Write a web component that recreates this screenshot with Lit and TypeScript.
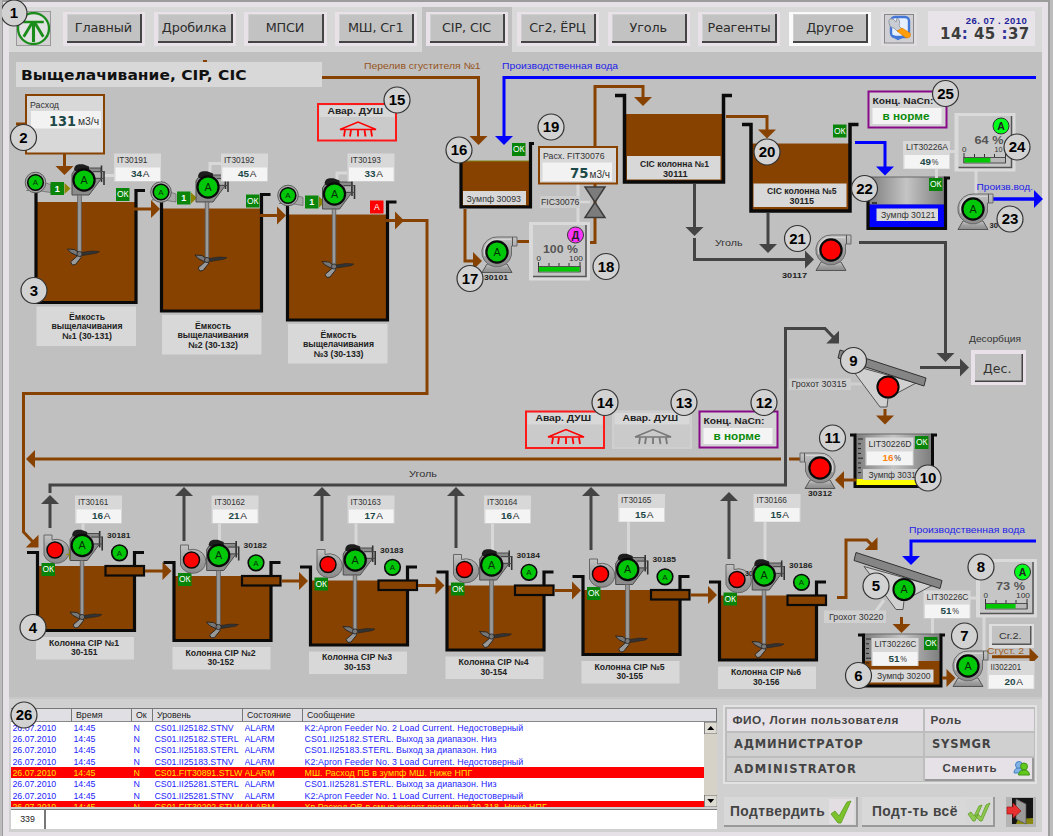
import { LitElement, html, svg, css } from "lit";
import { customElement } from "lit/decorators.js";
import { classMap } from "lit/directives/class-map.js";

const BROWN = "#874200";
const DARK = "#444444";
const BLUE = "#0000ff";
const PLATE = "#d8d8d8";
const SANS = "Liberation Sans, Arial, sans-serif";
const WIDE = "DejaVu Sans, Verdana, sans-serif";

type Pt = [number, number];

/* Text fitted between two x positions. */
const text = (x1: number, x2: number, y: number, s: string, size = 8.5, fill = "#333", weight = 400, family = SANS) => svg`
  <text x=${x1} y=${y} textLength=${x2 - x1} lengthAdjust="spacingAndGlyphs" font-family=${family}
    font-size=${size} font-weight=${weight} fill=${fill}>${s}</text>`;

const rect = (x1: number, y1: number, x2: number, y2: number, fill: string, stroke = "none", sw = 0) => svg`
  <rect x=${x1} y=${y1} width=${x2 - x1} height=${y2 - y1} fill=${fill} stroke=${stroke} stroke-width=${sw}></rect>`;

const line = (pts: Pt[], color: string, w = 3) => svg`
  <polyline points=${pts.map((p) => p.join(",")).join(" ")} fill="none" stroke=${color} stroke-width=${w}></polyline>`;

/* Arrow head with its tip at (x, y), rotated by the given angle from pointing right. */
const head = (x: number, y: number, angle: number, color: string) => svg`
  <path d="M0 0L-9 -9V9Z" fill=${color} transform="translate(${x} ${y}) rotate(${angle})"></path>`;

const marker = (n: number, x: number, y: number) => svg`
  <circle cx=${x} cy=${y} r="13" fill="#d2d2d2" stroke="#333" stroke-width="1.2"></circle>
  <text x=${x} y=${y + 5.2} text-anchor="middle" font-family=${SANS} font-size="15" font-weight="700" fill="#000">${n}</text>`;

const lamp = (x: number, y: number, r: number, color: string, letter = "", ring = 1.8) => svg`
  <circle cx=${x} cy=${y} r=${r} fill=${color} stroke="#0a0a0a" stroke-width=${ring}></circle>
  <text x=${x} y=${y + r * 0.36} text-anchor="middle" font-family=${SANS} font-size=${r * 1.02} fill="#053005">${letter}</text>`;

const status = (x: number, y: number, s = "ОК", color = "#088508") => svg`
  ${rect(x, y, x + 13.5, y + 13, color)}
  <text x=${x + 6.8} y=${y + 9.2} text-anchor="middle" font-family=${SANS} font-size="8.5" fill="#fff">${s}</text>`;

/* Tag name over a white field with a value and its unit. */
const tag = (x: number, y: number, name: string, value: string, unit: string, w = 47, color = "#1d4848") => svg`
  ${rect(x, y, x + w, y + 28, PLATE)}
  ${rect(x + 1.5, y + 14, x + w - 1, y + 27.5, "#f4f4f4")}
  ${text(x + 3, x + (name.length > 8 ? w - 2 : 33.5), y + 9.3, name, 8.5)}
  ${text(x + 17, x + 28, y + 23.5, value, 9.5, color, 700)}
  ${text(x + 28.8, x + 35.5, y + 23.5, unit, 9, "#333")}`;

const pump = (x: number, y: number, color: string, letter = "", flip = false) => svg`
  <g transform="translate(${x} ${y}) scale(${flip ? -1 : 1} 1)">
    <path d="M-10 12L-15 20.500H15L10 12Z" fill="url(#metal)" stroke="#555" stroke-width="1"></path>
    <path d="M20 -15H1A15 15 0 1 0 14.500 3V-6H20Z" fill="url(#metal)" stroke="#6a6a6a" stroke-width="1"></path>
    <path d="M-12 4A12.500 12.500 0 0 1 0 -12.500H14" fill="none" stroke="#d6d6d6" stroke-width="1.200"></path>
    <path d="M15.500 -15V-6" stroke="#555" stroke-width="1"></path>
  </g>
  ${lamp(x, y, 10.6, color, letter, 2.2)}`;

/* Round blower next to an agitator, with its duct and stage number. */
const blower = (x: number, y: number, bx: number, by: number) => svg`
  <path d="M${x - 9} ${y + 8}H${x + 2}L${x + 15} ${y + 10}V${y + 2}L${x + 9} ${y}Z" fill="#a8a8a8" stroke="#666" stroke-width=".7"></path>
  <circle cx=${x} cy=${y} r="10.300" fill="#a8a8a8" stroke="#5c5c5c" stroke-width="1"></circle>
  ${lamp(x, y, 7.8, "#00c808", "А", 1.6)}
  ${rect(bx, by, bx + 13.500, by + 13, "#0b860b")}
  <text x=${bx + 6.8} y=${by + 9.500} text-anchor="middle" font-family=${SANS} font-size="9" font-weight="700" fill="#fff">1</text>
  <path d="M${bx + 14} ${by + 1}L${bx + 20} ${by + 6.500}L${bx + 14} ${by + 12}Z" fill="#8d8500"></path>`;

/* Agitator drive centred on its lamp, with shaft and impeller. */
const agitator = (x: number, y: number, sx: number, sy: number) => svg`
  <path d="M${x - 12} ${y - 6}L${x - 8} ${y - 12}H${x + 17}V${y - 1}L${x + 5} ${y + 15}H${x - 12}Z" fill="#8b8b8b" stroke="#4c4c4c" stroke-width="1"></path>
  <path d="M${x - 10} ${y - 11}Q${x - 9} ${y - 15.500} ${x - 5} ${y - 15.800}H${x - 1}L${x + 5} ${y - 13.500}V${y - 9}H${x - 9}Z" fill="#1d1d1d"></path>
  <path d="M${x + 17.500} ${y - 14.500}V${y + 2}M${x + 20} ${y - 9}V${y + 5}" stroke="#333" stroke-width="1.600"></path>
  <path d="M${x + 9} ${y - 8.500}H${x + 20}M${x + 11} ${y - 1.500}H${x + 20}" stroke="#4a4a4a" stroke-width="1.200"></path>
  <path d="M${x + 10} ${y - 7.500}H${x + 16.500}V${y - 2.500}H${x + 11}Z" fill="#b0b0b0"></path>
  ${rect(sx - 1.8, y + 15, sx + 1.8, sy, "#9a9a9a", "#5c5c5c", 0.8)}
  <g transform="translate(${sx} ${sy + 1})">
    <path d="M-12 -5L-5 -4.500L0 -1L-2 2L-9 -1.500Z" fill="#777" stroke="#222" stroke-width=".9"></path>
    <path d="M2 -1.500L12 -3L20 -2.500L17 -.8L3 1.500Z" fill="#333" stroke="#222" stroke-width=".6"></path>
    <path d="M-1 1L-9 8L-7 11L-4 10.500L2 3Z" fill="#999" stroke="#222" stroke-width=".9"></path>
    <circle r="2.600" fill="#777" stroke="#222" stroke-width=".8"></circle>
  </g>
  ${lamp(x, y, 10.6, "#00c808", "А", 2.2)}`;

const leachTank = (left: number, flangeY: number, fillY: number, bottom: number) => svg`
  ${rect(left, fillY, left + 100, bottom, BROWN)}
  ${line([[left, fillY - 12], [left, bottom], [left + 100, bottom], [left + 100, flangeY], [left + 109, flangeY]], "#0a0a0a", 3.2)}
  ${rect(left + 0.5, bottom + 4, left + 100, bottom + 43.500, PLATE)}`;

const leachName = (cx: number, y: number, n: number) => svg`
  ${text(cx - 18, cx + 18, y, "Ёмкость", 8.3, "#222", 700)}
  ${text(cx - 35.500, cx + 35.500, y + 9.800, "выщелачивания", 8.3, "#222", 700)}
  ${text(cx - 25, cx + 25, y + 19.500, `№${n} (30-13${n})`, 8.5, "#222", 700)}`;

/* One CIP column; dx/dy shift it from the first one in the cascade. */
const column = (n: number, dx: number, dy: number, tagX: number, tagY: number, amps: string) => svg`
  ${line([[83 + dx, tagY + 28], [83 + dx, 535 + dy]], PLATE, 3)}
  <g transform="translate(${dx} ${dy})">
    ${rect(37, 566, 135, 631, BROWN)}
    ${line([[27, 552.500], [37.500, 552.500], [37.500, 630.500], [134.500, 630.500], [134.500, 552.500], [144, 552.500]], "#0a0a0a", 3.2)}
    ${rect(105.5, 566, 144, 575.5, BROWN, "#0a0a0a", 2.2)}
    ${n < 6 ? svg`${line([[145, 571], [164, 571]], BROWN, 3)}${head(171.500, 571, 0, BROWN)}` : ""}
    ${status(41.5, 563)}
    <path d="M44 535H52V540A13 12 0 1 1 44 555Z" fill="url(#metal)" stroke="#666" stroke-width="1"></path>
    ${lamp(55, 550, 8, "#ff0000", "", 1.5)}
    ${n === 1 ? svg`<path d="M66 554H69V549L75 554L69 560V555H66Z" fill="#9c9400"></path>` : ""}
    ${n === 6 ? text(63, 71, 546, "30", 8, "#222", 700) : ""}
    ${agitator(82.200, 545.500, 82, 616)}
    ${lamp(119.500, 552.800, 7.800, "#00c808", "А", 1.600)}
    ${text(107, 130.500, 538, `3018${n}`, 8, "#222", 700)}
    ${rect(36, 637, 134, 659.500, PLATE)}
    ${text(49, 119, 645.500, `Колонна CIP №${n}`, 8.5, "#222", 700)}
    ${text(71, 97.500, 655, `30-15${n}`, 8.5, "#222", 700)}
  </g>
  ${tag(tagX, tagY, `IT3016${n}`, amps, "А")}`;

/* Speed controller: lamp, percentage and a bar scale. */
const controller = (x: number, y: number, pct: number, letter: string, color: string, full: string) => svg`
  ${rect(x, y, x + 61, y + 58.500, "#dadada")}
  ${rect(x + 4, y + 3, x + 56, y + 54, "#c6c6c6")}
  ${line([[x + 4, y + 54.500], [x + 57, y + 54.500], [x + 57, y + 3]], "#555", 1.600)}
  <circle cx=${x + 46.500} cy=${y + 13} r="8" fill=${color} stroke="#333" stroke-width="1"></circle>
  <text x=${x + 46.500} y=${y + 16.800} text-anchor="middle" font-family=${SANS} font-size="10.500" font-weight="700" fill="#222">${letter}</text>
  ${text(x + (pct === 100 ? 14 : 20), x + 49, y + 30.500, `${pct} %`, 11, "#555", 700, SANS)}
  ${text(x + 7.500, x + 12, y + 38.500, "0", 8)}
  ${text(x + 40, x + (full === "100" ? 54 : 48), y + 38.500, full, 8)}
  ${line([[x + 9.500, y + 40], [x + 9.500, y + 50]], "#333", 1)}
  ${line([[x + 51, y + 40], [x + 51, y + 50]], "#333", 1)}
  ${[20, 30, 40].map((d) => line([[x + d, y + 41], [x + d, y + 44]], "#333", 1))}
  ${rect(x + 9.500, y + 44.500, x + 51, y + 50, "#b8b8b8", "#333", 0.800)}
  ${rect(x + 10, y + 45, x + 10 + 40.500 * pct / 100, y + 49.500, "#00c800")}`;

const shower = (x: number, y: number, color: string, border: string) => svg`
  ${rect(x, y, x + 78, y + 36.500, "#cacaca", border, 2)}
  ${rect(x + 1.500, y + 1.500, x + 76.500, y + 13, PLATE)}
  ${text(x + 9.500, x + 65, y + 9.500, "Авар. ДУШ", 9, "#222", 700)}
  <path d="M${x + 22} ${y + 25.500}L${x + 40} ${y + 18}L${x + 58} ${y + 25.500}Z" fill="none" stroke=${color} stroke-width="1.600"></path>
  ${[27, 33, 40, 46.500, 53].map((d) => line([[x + d, y + 26], [x + d - (d < 40 ? 1 : d > 40 ? -1 : 0), y + 32.500]], color, 1.800))}`;

const cyanide = (x: number, y: number) => svg`
  ${rect(x, y, x + 78, y + 36, "#d4d4d4", "#880a88", 2)}
  ${text(x + 4, x + 65, y + 12.500, "Конц. NaCn:", 9, "#222", 700)}
  ${rect(x + 4, y + 16.500, x + 73, y + 32.500, "#f4f4f4")}
  ${text(x + 14, x + 61, y + 28.500, "в норме", 10.500, "#0a8a0a", 700)}`;

const screen = (x: number, y: number, lampColor: string, letter: string) => svg`
  <path d="M${x + 10} ${y + 14}L${x + 42} ${y + 57}H${x + 49}L${x + 50} ${y + 48}L${x + 78} ${y + 33}Z" fill="#d0d0d0" stroke="#555" stroke-width="1"></path>
  <path d="M${x + 2} ${y}L${x + 88} ${y + 28}L${x + 86} ${y + 36}L${x} ${y + 8}Z" fill="#858585" stroke="#333" stroke-width="1"></path>
  ${lamp(x + 50, y + 37, 10.600, lampColor, letter, 2)}`;

const gauge = (x: number, y: number) => [0, 1, 2, 3, 4, 5, 6, 7].map((i) => line([[x, y + i * 4.800], [x + (i % 4 ? 3 : 5), y + i * 4.800]], "#222", 1));

@customElement("process-mimic")
class ProcessMimic extends LitElement {
  static styles = css`
    :host { display: block; }
    svg { display: block; width: 1033px; height: 645px; overflow: visible; }
  `;

  private leaching() {
    return svg`
      ${rect(16, 62, 322, 87, PLATE)}
      ${text(21, 246.500, 80, "Выщелачивание, CIP, CIC", 14, "#111", 700, WIDE)}
      ${rect(203, 60, 207, 62, BROWN)}
      ${line([[16, 124], [26, 124]], BROWN, 3)}
      ${rect(26, 95, 104, 153.500, PLATE, BROWN, 2)}
      ${text(30, 59, 108, "Расход", 9)}
      ${rect(31, 111, 101, 128.500, "#f2f2f2")}
      ${text(49, 76, 125.500, "131", 14, "#1d4848", 700, WIDE)}
      ${text(78, 99, 125, "м3/ч", 10)}
      ${line([[64.500, 154], [64.500, 168]], BROWN, 3)}${head(64.500, 175, 90, BROWN)}
      ${leachTank(36, 190.500, 202, 302.500)}
      ${leachTank(161.500, 194.500, 208.500, 311)}
      ${leachTank(287.500, 202, 214.500, 320)}
      ${leachName(87, 319.500, 1)}${leachName(213, 328.500, 2)}${leachName(338.500, 337.500, 3)}
      ${line([[134, 209], [154, 209]], BROWN)}${head(160, 209, 0, BROWN)}
      ${line([[260, 215.500], [279, 215.500]], BROWN)}${head(286, 215.500, 0, BROWN)}
      ${line([[386, 220.500], [427, 220.500], [427, 393.500], [23.500, 393.500], [23.500, 532], [33, 542]], BROWN)}
      ${head(404, 220.500, 0, BROWN)}${head(38.500, 547.500, 45, BROWN)}
      ${line([[103, 175.500], [114, 175.500]], PLATE, 3)}
      ${line([[210, 172], [210, 163.500], [222, 163.500]], PLATE, 3)}
      ${line([[337, 180], [337, 173], [347, 173]], PLATE, 3)}
      ${blower(35.500, 182.500, 50.500, 182)}
      ${blower(161, 192, 177, 191.500)}
      ${blower(288, 195.500, 305, 195.500)}
      ${agitator(84, 180, 79.500, 253)}
      ${agitator(208, 187, 207, 259)}
      ${agitator(334.500, 194, 334, 265.500)}
      ${tag(114, 153.500, "IT30191", "34", "А")}
      ${tag(221, 153.500, "IT30192", "45", "А")}
      ${tag(347.500, 153.500, "IT30193", "33", "А")}
      ${status(116, 188)}${status(246, 194.500)}${status(370, 200.500, "А", "#ff0000")}
      ${shower(318, 104, "#ff0000", "#ff1a1a")}`;
  }

  private carbon() {
    return svg`
      ${text(364, 480.500, 69, "Перелив сгустителя №1", 9, "#96541c")}
      ${text(502, 618, 69, "Производственная вода", 9, "#2222e8")}
      ${line([[322, 77.500], [478.500, 77.500], [478.500, 138]], BROWN)}${head(478.500, 145, 90, BROWN)}
      ${line([[1036, 77.500], [504, 77.500], [504, 138]], BLUE)}${head(504, 145, 90, BLUE)}
      ${rect(461, 161, 530, 207, BROWN)}
      ${line([[461, 161], [530, 161]], "#83831a", 1)}
      ${line([[461, 156], [461, 207], [530.500, 207], [530.500, 143.500], [534, 143.500]], "#0a0a0a", 3.200)}
      ${rect(463, 191, 526, 205, PLATE)}${text(466.500, 521, 202, "Зумпф 30093", 9)}
      ${status(512, 143)}
      ${line([[465, 209], [465, 261], [476, 261]], BROWN)}${head(482, 261, 0, BROWN)}
      ${line([[517, 241.500], [532, 241.500]], BROWN)}
      ${line([[586, 242.500], [595, 242.500], [595, 86.500], [643, 86.500], [643, 98]], BROWN)}${head(643, 106, 90, BROWN)}
      ${line([[578, 184], [578, 225]], PLATE)}
      ${pump(497, 252, "#00c808", "А")}
      ${text(484, 508, 280, "30101", 8, "#222", 700)}
      ${controller(529, 222, 100, "Д", "#ff33ff", "100")}
      ${rect(539, 147, 617, 183.500, PLATE, BROWN, 2)}
      ${text(543, 604.500, 159, "Расх. FIT30076", 9)}
      ${rect(542.500, 162.500, 612, 181, "#f2f2f2")}
      ${text(570, 588.500, 178, "75", 14, "#1d4848", 700, WIDE)}${text(589.500, 610, 177.500, "м3/ч", 10)}
      ${line([[579, 202], [590, 202]], PLATE, 2.500)}
      <path d="M585 187H605L585 217.500H605Z" fill="#7c7c7c" stroke="#3c3c3c" stroke-width="1.500"></path>
      ${rect(540, 196, 580, 208, "#cdcdcd")}${text(541, 579.500, 205, "FIC30076", 8.500)}

      ${rect(624, 114, 723, 182, BROWN)}
      ${line([[615, 95.500], [624.500, 95.500], [624.500, 182], [723.500, 182], [723.500, 95.500], [732, 95.500]], "#0a0a0a", 3.500)}
      ${rect(627, 156, 720.500, 179.500, PLATE)}
      ${text(640, 709, 166.500, "CIC колонна №1", 8.500, "#222", 700)}${text(663, 687.500, 176.500, "30111", 8.500, "#222", 700)}
      ${line([[726, 116.500], [767, 116.500], [767, 131]], BROWN)}${head(767, 138.500, 90, BROWN)}
      ${rect(751, 143.500, 850, 211, BROWN)}
      ${line([[742, 124.500], [751, 124.500], [751, 211], [850, 211], [850, 124.500], [858.500, 124.500]], "#0a0a0a", 3.500)}
      ${rect(753.500, 183.500, 846.500, 207, PLATE)}
      ${text(767, 836.500, 194, "CIC колонна №5", 8.500, "#222", 700)}${text(789.500, 814, 204, "30115", 8.500, "#222", 700)}
      ${status(833, 124.500)}
      ${line([[694.500, 184], [694.500, 228]], DARK)}${head(694.500, 236, 90, DARK)}
      ${line([[694.500, 238], [694.500, 259.500], [806, 259.500]], DARK)}${head(814, 259.500, 0, DARK)}
      ${line([[768, 213], [768, 245]], DARK)}${head(768, 253, 90, DARK)}
      ${text(715, 742.500, 246, "Уголь", 9)}
      ${pump(831, 250, "#ff0000")}
      ${text(782, 807, 278, "30117", 8, "#222", 700)}
      ${line([[859, 242.500], [945.500, 242.500], [945.500, 354]], DARK)}${head(945.500, 362, 90, DARK)}
      ${line([[920, 367.500], [961, 367.500]], DARK)}${head(969, 367.500, 0, DARK)}

      ${line([[855, 142.500], [885, 142.500], [885, 168]], BLUE)}${head(885, 175.500, 90, BLUE)}
      ${rect(868, 177, 945, 205, "url(#steel)", "#555", 0.800)}
      ${rect(868, 204.500, 945, 228, BLUE)}
      ${line([[868, 196], [868, 228.500], [945.500, 228.500], [945.500, 178], [950, 178]], "#0a0a0a", 3.200)}
      ${line([[872, 203], [877, 203]], "#222", 1.500)}
      ${rect(876.500, 208.500, 938, 221, PLATE)}${text(881, 935.500, 217.500, "Зумпф 30121", 9)}
      ${line([[936.500, 169], [936.500, 178]], PLATE)}${line([[948, 151.500], [956, 151.500]], PLATE)}
      ${status(929, 178)}
      ${tag(903, 141, "LIT30226A", "49", "%")}
      ${line([[976, 171], [976, 196]], PLATE)}
      ${controller(954.500, 113, 64, "А", "#00ff1a", "10")}
      ${line([[993, 199], [1034, 199]], BLUE, 3.500)}${head(1043, 199, 0, BLUE)}
      ${pump(973, 209, "#00c808", "А")}
      ${text(989.500, 998, 228, "30", 8, "#222", 700)}
      ${text(976.500, 1033, 190, "Произв.вод.", 9.500, "#2222e8")}
      ${cyanide(868.500, 91.500)}`;
  }

  private desorption() {
    return svg`
      ${text(969, 1021, 342, "Десорбция", 9)}
      ${rect(971, 350, 1026, 385, "#e8e2e8")}
      ${rect(975, 354, 1023, 382, "#444")}${rect(975, 354, 1021.500, 380.500, "#c2c2c2")}
      ${text(983, 1011.500, 372.500, "Дес.", 12.500, "#333", 400, WIDE)}
      ${line([[50, 493], [50, 485], [785.500, 485], [785.500, 328.500], [825, 328.500], [834, 338]], DARK)}${head(839, 343.500, 45, DARK)}
      ${text(409, 437, 477, "Уголь", 9)}
      ${line([[851, 384], [862, 384]], "#cfcfcf", 3)}
      ${screen(838, 350, "#ff0000", "")}
      ${rect(789, 378.500, 851, 390, "#cdcdcd")}${text(791.500, 846.500, 387, "Грохот 30315", 8.500)}
      ${line([[885, 409], [885, 416]], BROWN)}${head(885, 424.500, 90, BROWN)}
      ${line([[34, 459], [781, 459]], BROWN)}${line([[789, 459], [801, 459]], BROWN)}${head(26, 459, 180, BROWN)}
      ${rect(855, 434, 932, 487, "url(#steel)", "#555", 0.800)}
      ${rect(855, 479, 932, 487, "#ffff00")}
      ${gauge(858, 439)}
      ${line([[850, 435], [855, 435], [855, 486.500], [932.500, 486.500], [932.500, 435], [937, 435]], "#0a0a0a", 3)}
      ${rect(863, 469, 926, 480, "#d0d0d0")}${text(868.500, 916, 478, "Зумпф 3031", 9)}
      ${tag(865.500, 437.500, "LIT30226D", "16", "%", 48, "#ff8412")}
      ${status(915, 436)}
      ${line([[856, 480], [844, 480]], BROWN)}${head(835, 480, 180, BROWN)}
      ${pump(820, 468, "#ff0000", "", true)}
      ${text(808, 832, 496, "30312", 8, "#222", 700)}
      ${shower(526, 411.500, "#ff0000", "#ff1a1a")}
      ${shower(613, 411.500, "#777", "#cfcfcf")}
      ${cyanide(699.500, 411.500)}`;
  }

  private columns() {
    const risers: Pt[] = [[50, 495], [184, 487], [322, 487], [456, 487], [591, 487], [729, 492]];
    const feet = [528, 541, 541, 548, 550, 559];
    return svg`
      ${risers.map(([x, y], i) => svg`${line([[x, y + 8], [x, feet[i]]], DARK)}${head(x, y, -90, DARK)}`)}
      ${column(1, 0, 0, 75, 495.500, "16")}
      ${column(2, 136.500, 10, 211.500, 495.500, "21")}
      ${column(3, 273, 14.500, 347.500, 495.500, "17")}
      ${column(4, 409.500, 19.500, 484, 495.500, "16")}
      ${column(5, 545.500, 24, 618, 494, "15")}
      ${column(6, 682, 29.500, 753.500, 494, "15")}
      ${line([[837, 597.500], [846, 597.500], [846, 540], [867, 540], [872, 545]], BROWN)}${head(877.500, 550, 45, BROWN)}`;
  }

  private thickener() {
    return svg`
      ${text(909, 1025, 532.500, "Производственная вода", 9.500, "#2222e8")}
      ${line([[1036, 541], [911, 541], [911, 557]], BLUE)}${head(911, 565, 90, BLUE)}
      ${line([[876, 611], [884, 600]], PLATE)}
      ${screen(854, 552.500, "#00c808", "А")}
      ${rect(824, 610.500, 886, 623, "#d0d0d0")}${text(829, 883.500, 619.500, "Грохот 30220", 8.500)}
      ${line([[901.500, 617], [901.500, 625]], BROWN)}${head(901.500, 633, 90, BROWN)}
      ${line([[969, 598], [977, 598]], PLATE)}${line([[932.500, 618], [932.500, 636]], PLATE)}${line([[984, 616], [984, 652]], PLATE)}
      ${rect(863, 634, 941, 662, "url(#steel)", "#555", 0.800)}
      ${rect(863, 661, 941, 686, BROWN)}
      ${gauge(866, 639)}
      ${line([[858, 635], [863.500, 635], [863.500, 686], [941, 686], [941, 635], [945, 635]], "#0a0a0a", 3)}
      ${rect(870, 669.500, 933.500, 682.500, PLATE)}${text(877, 930.500, 679, "Зумпф 30200", 9)}
      ${tag(871.500, 638, "LIT30226C", "51", "%")}
      ${status(924, 637)}
      ${tag(923.500, 590.500, "LIT30226C", "51", "%")}
      ${controller(976, 559, 73, "А", "#00ff1a", "100")}
      ${line([[942, 678], [948, 678]], BROWN)}${head(955.500, 678, 0, BROWN)}
      ${pump(968, 666, "#00c808", "А")}
      ${rect(989, 624, 1034, 648, "#dedede")}
      ${rect(992, 626, 1031.500, 645, "#555")}${rect(992, 626, 1030, 643.500, "#c2c2c2")}
      ${text(999, 1021.500, 638.500, "Сг.2.", 9.5, "#333")}
      ${text(987, 1024, 654, "Сгуст. 2", 9, "#a2601c")}
      ${line([[992, 656.800], [1030, 656.800]], BROWN)}${head(1038.500, 656.800, 0, BROWN)}
      ${tag(987.500, 661, "II302201", "20", "А")}`;
  }

  private markers() {
    const at: [number, number, number][] = [
      [2, 23.500, 137.500], [3, 34, 290.500], [4, 33, 627.500], [5, 876, 586], [6, 858.500, 675.500],
      [7, 964.500, 636], [8, 981, 567], [9, 853.500, 360.500], [10, 928, 478], [11, 832.500, 438],
      [12, 764, 402.500], [13, 684, 402.500], [14, 605, 402.500], [15, 397, 100], [16, 459, 150],
      [17, 470, 278.500], [18, 606, 266.500], [19, 551, 127], [20, 767, 152], [21, 797.500, 238.500],
      [22, 864.500, 188.500], [23, 1010, 219], [24, 1017, 147], [25, 945.500, 93.500],
    ];
    return at.map(([n, x, y]) => marker(n, x, y));
  }

  render() {
    return html`<svg viewBox="9 52 1033 645">
      <defs>
        <linearGradient id="metal" x1="0" y1="0" x2="0" y2="1">
          <stop offset="0" stop-color="#c4c4c4"></stop><stop offset=".5" stop-color="#a0a0a0"></stop><stop offset="1" stop-color="#8a8a8a"></stop>
        </linearGradient>
        <linearGradient id="steel">
          <stop offset="0" stop-color="#7c7c7c"></stop><stop offset=".5" stop-color="#c4c4c4"></stop><stop offset="1" stop-color="#7c7c7c"></stop>
        </linearGradient>
      </defs>
      ${this.leaching()}${this.carbon()}${this.desorption()}${this.columns()}${this.thickener()}${this.markers()}
    </svg>`;
  }
}

@customElement("nav-bar")
class NavBar extends LitElement {
  static styles = css`
    :host { display: flex; align-items: stretch; background: #d8d8d8; font-family: "DejaVu Sans", Verdana, sans-serif; }
    .logo { width: 35px; height: 35px; box-sizing: border-box; border: 1px solid #999; background: #d4d0d4; margin: 4px 8px 0 6.500px; }
    .logo svg { display: block; width: 33px; height: 33px; }
    .tab { width: 90.800px; box-sizing: border-box; padding: 4.500px 4.400px 0; }
    .tab.active { background: #c0c0c0; }
    .frame { height: 34.500px; box-sizing: border-box; background: #e8e2e8; padding: 2.500px 3px 2.500px 4px; }
    .frame.light { background: #fafafa; }
    .button { height: 29px; box-sizing: border-box; display: flex; align-items: center; justify-content: center;
      background: #c2c2c2; border: solid #444; border-width: 0 2px 2px 0; color: #2c2c2c; font-size: 12.800px;
      letter-spacing: -.15px; white-space: nowrap; padding-bottom: 1px; box-shadow: inset 1px 1px #d0d0d0; }
    .tool { width: 36px; height: 34px; margin: 4.500px 11px 0 5px; background: #e0dde0; display: flex; align-items: center; justify-content: center; }
    .tool svg { width: 30px; height: 30px; }
    .clock { width: 107px; height: 35px; margin-top: 4px; background: #e8e3e8; display: flex; flex-direction: column;
      align-items: flex-end; box-sizing: border-box; padding-right: 5px; font-weight: 700; }
    .date { font-size: 9.500px; line-height: 11px; margin: 3.500px 2.500px 0 0; color: #22229a; font-family: "Liberation Sans", Arial, sans-serif; letter-spacing: .45px; white-space: pre; }
    .time { font-size: 15px; line-height: 17px; color: #3c3c3c; white-space: pre; letter-spacing: .45px; }
    .time i { font-style: normal; color: #33339a; }
  `;

  private tabs = ["Главный", "Дробилка", "МПСИ", "МШ, Сг1", "CIP, CIC", "Сг2, ЁРЦ", "Уголь", "Реагенты", "Другое"];

  render() {
    return html`
      <div class="logo">
        <svg viewBox="0 0 32 32">
          <circle cx="16" cy="16" r="15" fill="#e2e2e2" stroke="#1a8c1a" stroke-width="2.200"></circle>
          <path d="M6 8.500H26V11H6ZM14.500 10H17.500V29H14.500Z" fill="#1a8c1a"></path>
          <path d="M15 10L6.500 24M17 10L25.500 24" stroke="#1a8c1a" stroke-width="2.800"></path>
        </svg>
      </div>
      ${this.tabs.map((t) => html`
        <div class=${classMap({ tab: true, active: t === "CIP, CIC" })}>
          <div class=${classMap({ frame: true, light: t === "Другое" })}><div class="button">${t}</div></div>
        </div>`)}
      <div class="tool">
        <svg viewBox="0 0 30 30">
          <rect x=".5" y=".5" width="29" height="28.500" fill="#cfcfd4" stroke="#888"></rect>
          <rect x="7" y="3" width="18" height="20" rx="4" fill="#e6efff" stroke="#4277d8" stroke-width="2.400"></rect>
          <path d="M9 22L14 25L20 22" stroke="#4277d8" stroke-width="2.400" fill="none"></path>
          <path d="M5 9Q4 4 9 5L12 8L13 4Q17 6 15 12L18 15L14 18L10 14Q6 14 5 9Z" fill="#c9ccd2" stroke="#8a8f98" stroke-width=".8"></path>
          <path d="M13 17L18 14L26 19Q28 24 22 24Z" fill="#ff9d0a" stroke="#d87a00" stroke-width=".6"></path>
        </svg>
      </div>
      <div class="clock">
        <div class="date">26. 07 . 2010</div>
        <div class="time">14<i>:</i> 45 <i>:</i>37</div>
      </div>`;
  }
}

interface Alarm { tag: string; message: string; critical?: boolean; }

@customElement("alarm-list")
class AlarmList extends LitElement {
  static styles = css`
    :host { display: block; font-family: "Liberation Sans", Arial, sans-serif; font-size: 8.800px; }
    .row { display: grid; grid-template-columns: 61px 60px 21px 90px 60px 1fr; white-space: nowrap; }
    .head { height: 13.500px; background: #e0dfe3; border-top: 1px solid #777; box-sizing: border-box; color: #222; line-height: 12.500px; }
    .head span { border-right: 1.500px solid #777; padding-left: 4px; border-bottom: 1px solid #888; box-sizing: border-box; height: 13px; }
    .view { display: flex; height: 85px; background: #fff; }
    .rows { flex: 1; overflow: hidden; }
    .item { height: 11.400px; line-height: 12.800px; color: #2424ff; padding-left: 1.500px; letter-spacing: -.03px; }
    .item.critical { background: #ff0000; color: #ffe000; }
    .item span { overflow: hidden; }
    .item span:last-child { letter-spacing: .1px; }
    .scroll { width: 13.500px; background: #d6d2c8; display: flex; flex-direction: column; justify-content: space-between; }
    .scroll svg { display: block; width: 13.500px; height: 12px; }
    .foot { display: flex; gap: 2px; margin-top: 2px; height: 20px; border-top: 1.500px solid #777; box-sizing: border-box; background: #777; color: #222; }
    .count { width: 33px; background: #fff; display: flex; align-items: center; justify-content: center; }
    .input { flex: 1; background: #fff; }
  `;

  private alarms: Alarm[] = [
    { tag: "CS01.II25182.STNV", message: "K2:Apron Feeder No. 2 Load Current. Недостоверный" },
    { tag: "CS01.II25182.STERL", message: "CS01.II25182.STERL. Выход за диапазон. Низ" },
    { tag: "CS01.II25183.STERL", message: "CS01.II25183.STERL. Выход за диапазон. Низ" },
    { tag: "CS01.II25183.STNV", message: "K2:Apron Feeder No. 3 Load Current. Недостоверный" },
    { tag: "CS01.FIT30891.STLW", message: "МШ. Расход ПВ в зумпф МШ. Ниже НПГ", critical: true },
    { tag: "CS01.II25281.STERL", message: "CS01.II25281.STERL. Выход за диапазон. Низ" },
    { tag: "CS01.II25281.STNV", message: "K2:Apron Feeder No. 1 Load Current. Недостоверный" },
    { tag: "CS01.FIT30202.STLW", message: "Хв.Расход ОВ в смыв кислот промывки 30-318. Ниже НПГ", critical: true },
  ];

  render() {
    return html`
      <div class="row head"><span></span><span>Время</span><span>Ок</span><span>Уровень</span><span>Состояние</span><span>Сообщение</span></div>
      <div class="view">
        <div class="rows">
          ${this.alarms.map((a) => html`
            <div class=${classMap({ row: true, item: true, critical: !!a.critical })}>
              <span>26.07.2010</span><span>14:45</span><span>N</span><span>${a.tag}</span><span>ALARM</span><span>${a.message}</span>
            </div>`)}
        </div>
        <div class="scroll">
          <svg viewBox="0 0 13 12"><path d="M0 0H13V12H0Z" fill="#dedbd3" stroke="#666"></path><path d="M3 8L6.500 4L10 8Z"></path></svg>
          <svg viewBox="0 0 13 12"><path d="M0 0H13V12H0Z" fill="#dedbd3" stroke="#666"></path><path d="M3 4L6.500 8L10 4Z"></path></svg>
        </div>
      </div>
      <div class="foot"><div class="count">339</div><div class="input"></div></div>`;
  }
}

@customElement("operator-panel")
class OperatorPanel extends LitElement {
  static styles = css`
    :host { display: flex; flex-direction: column; gap: 13px; font-family: "Liberation Sans", Arial, sans-serif; color: #444; font-weight: 700; }
    .table { width: 314px; height: 79px; box-sizing: border-box; border: 2.500px solid #e2e2e2; background: #bdbdbd; padding: 1.500px;
      display: grid; grid-template-columns: 196px 1fr; grid-template-rows: 22.500px 1fr 1fr; gap: 2px; }
    .cell { background: #d0d0d0; display: flex; align-items: center; padding-left: 7.500px; white-space: nowrap;
      font-family: "DejaVu Sans", Verdana, sans-serif; font-size: 11.500px; letter-spacing: .8px; }
    .cell.latin { letter-spacing: 1.200px; }
    .cell.title { background: #e6e1e6; font-family: "Liberation Sans", Arial, sans-serif; font-size: 11.800px; letter-spacing: .53px; padding: 1px 0 0 6px; }
    .cell.change { background: #e6e1e6; border: solid #999; border-width: 0 2px 2px 0; font-family: "Liberation Sans", Arial, sans-serif;
      font-size: 11.500px; letter-spacing: .7px; justify-content: space-between; padding: 0 1px 0 18px; }
    .change svg { width: 19px; height: 17px; }
    .buttons { display: flex; gap: 4px; padding-left: 1px; }
    .button { width: 134px; height: 30px; box-sizing: border-box; border: solid #999; border-width: 0 2.500px 2.500px 0; background: #d8d8d8;
      display: flex; align-items: center; justify-content: space-between; padding: 0 2px 0 6px; font-size: 13.800px; letter-spacing: .45px; white-space: nowrap; }
    .button.all { padding-left: 10px; width: 133px; }
    .button svg { width: 25px; height: 25px; background: #e2dee2; }
    .button.all svg { background: #d6d6d6; }
    .exit { width: 30px; height: 30px; margin-left: 7px; }
  `;

  render() {
    return html`
      <div class="table">
        <div class="cell title">ФИО, Логин пользователя</div><div class="cell title">Роль</div>
        <div class="cell">АДМИНИСТРАТОР</div><div class="cell">SYSMGR</div>
        <div class="cell latin">ADMINISTRATOR</div>
        <div class="cell change">Сменить
          <svg viewBox="0 0 19 17">
            <circle cx="7" cy="5" r="3.500" fill="#7fb2e8" stroke="#4b83c0"></circle><path d="M2 13Q2 8 7 8T12 13Z" fill="#7fb2e8" stroke="#4b83c0"></path>
            <circle cx="12" cy="6.500" r="3.500" fill="#62c81e" stroke="#3f9412"></circle><path d="M6.500 15Q7 10 12 10T17.500 15Z" fill="#62c81e" stroke="#3f9412"></path>
          </svg>
        </div>
      </div>
      <div class="buttons">
        <div class="button">Подтвердить
          <svg viewBox="0 0 25 25"><path d="M2 15L6 12L10 17L18 3L22 2L12 24H9Z" fill="#7cc22c" stroke="#5a9a1c" stroke-width=".8"></path></svg>
        </div>
        <div class="button all">Подт-ть всё
          <svg viewBox="0 0 25 25"><path d="M2 15L5 13L8 17L13 7L16 6L9 22H7ZM9 17L12 15L15 18L20 6L24 4L16 22H14Z" fill="#8ec84e" stroke="#5f9e26" stroke-width=".8"></path></svg>
        </div>
        <svg class="exit" viewBox="0 0 30 30">
          <path d="M0 0H30V30H0Z" fill="#b4b4b4"></path><path d="M6 1H27V27H6Z" fill="#151515"></path>
          <path d="M12 22L27 21V27H10Z" fill="#8a8a12"></path><path d="M10 2L20 7V27L10 22Z" fill="#9a9a9a" stroke="#555" stroke-width=".7"></path>
          <path d="M1 10H7V6L15 14L7 21V17H1Z" fill="#e83030" stroke="#a01414" stroke-width=".7"></path>
        </svg>
      </div>`;
  }
}

@customElement("app-root")
class AppRoot extends LitElement {
  static styles = css`
    :host { display: block; width: 1053px; height: 836px; box-sizing: border-box; position: relative; overflow: hidden;
      background: #e6e1e6; border: solid #bcbcbc; border-width: 0 3px 0 2px; }
    .window { height: 836px; box-sizing: border-box; border: solid #9c9c9c; border-width: 2px 2px 0 1px; padding: 5px 6px 0 6px;
      display: flex; flex-direction: column; }
    nav-bar { height: 45px; }
    process-mimic { height: 645px; background: #c0c0c0; }
    .bottom { height: 135px; box-sizing: border-box; background: #d0d0d0; border-top: 2px solid #c8c8c8; display: flex; gap: 6px; padding: 6px 0 0 2px; }
    alarm-list { width: 706px; margin-top: 3px; }
    .badge { position: absolute; width: 28px; height: 28px; overflow: visible; }
    .first { left: -2px; top: 0; }
    .last { left: 8px; top: 701px; }
  `;

  render() {
    return html`
      <div class="window">
        <nav-bar></nav-bar>
        <process-mimic></process-mimic>
        <div class="bottom"><alarm-list></alarm-list><operator-panel></operator-panel></div>
      </div>
      <svg class="badge first" viewBox="0 0 28 28">${marker(1, 14, 13)}</svg>
      <svg class="badge last" viewBox="0 0 28 28">${marker(26, 14, 14)}</svg>`;
  }
}
